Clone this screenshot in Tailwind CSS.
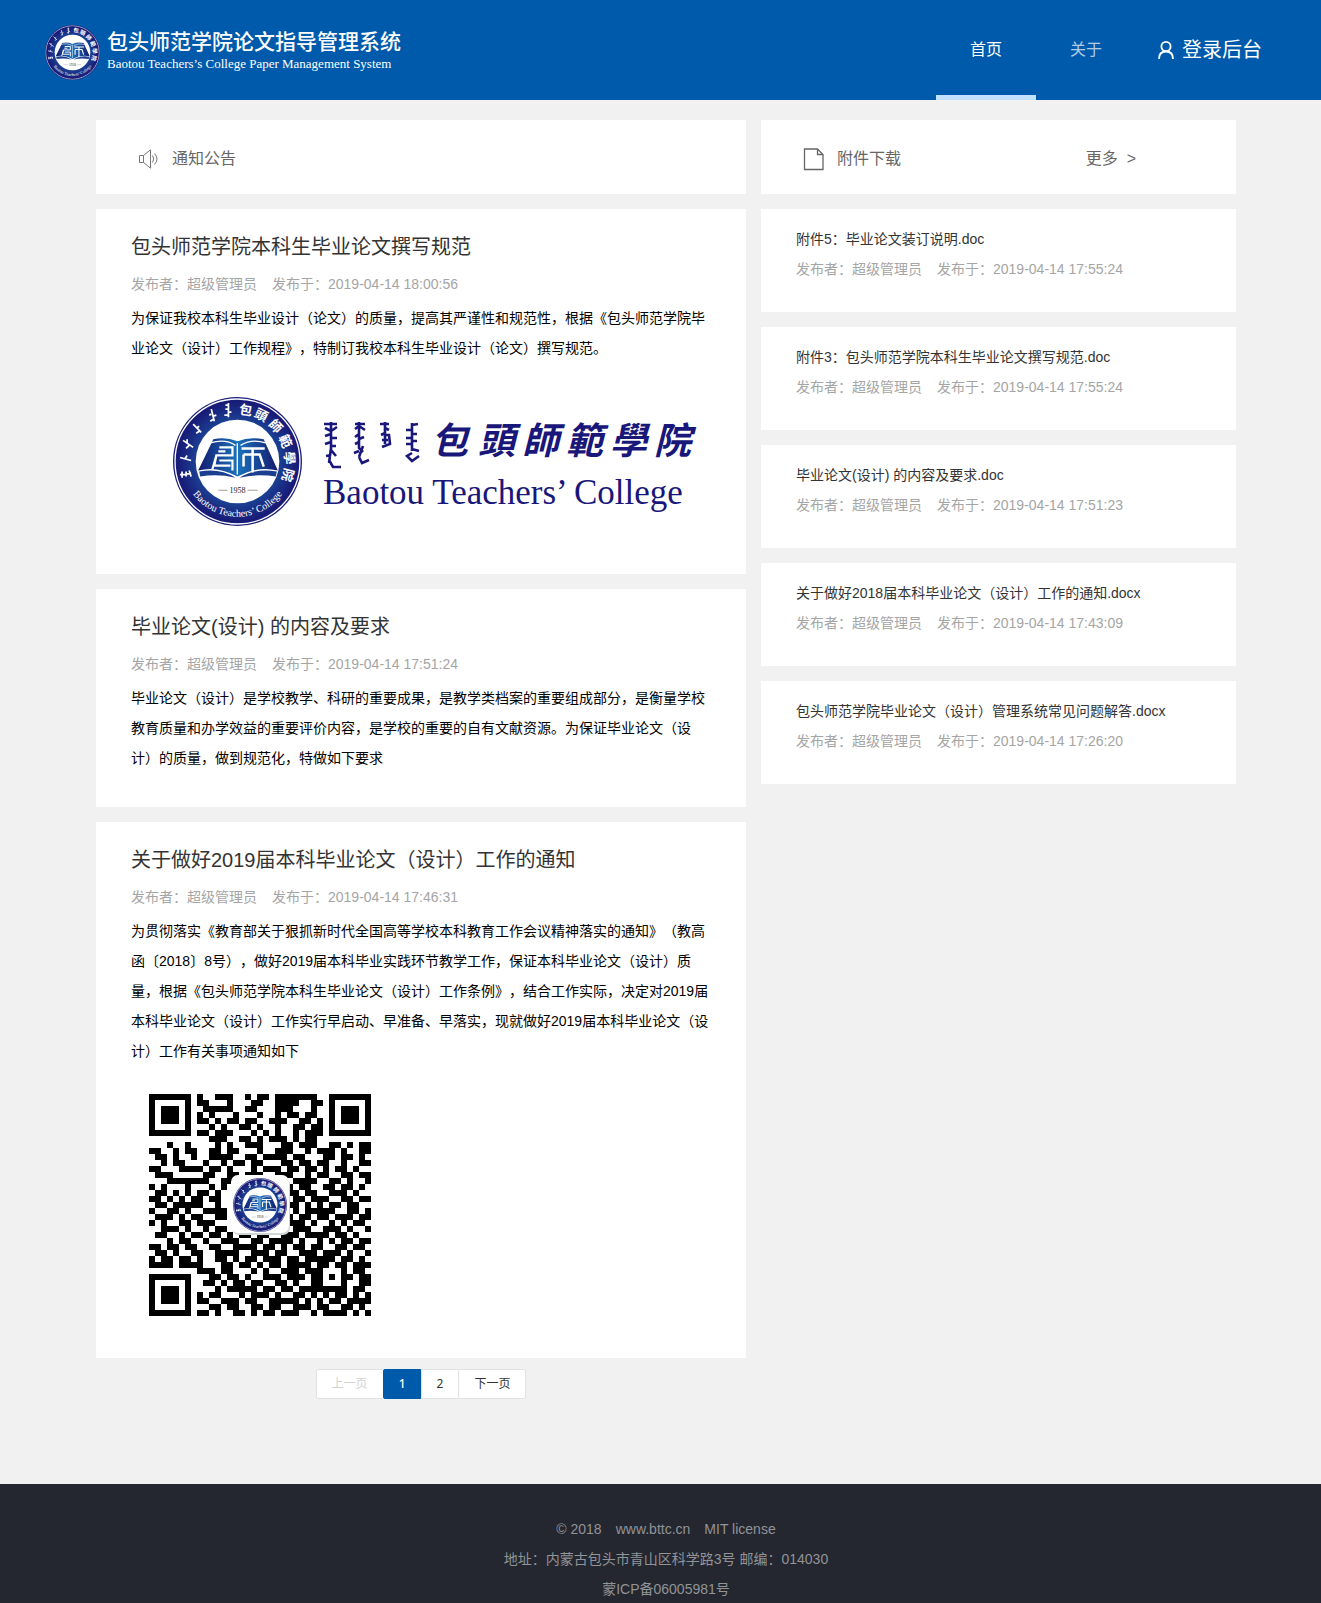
<!DOCTYPE html>
<html lang="zh-CN">
<head>
<meta charset="utf-8">
<meta name="viewport" content="width=device-width, initial-scale=1">
<title>包头师范学院论文指导管理系统</title>
<script src="https://cdn.jsdelivr.net/npm/@tailwindcss/browser@4"></script>
</head>
<body class="bg-[#f1f1f1] font-['Liberation_Sans','Noto_Sans_CJK_SC',sans-serif] text-sm leading-[30px] text-black [text-spacing-trim:space-all]">

<svg class="absolute size-0" aria-hidden="true">
  <defs>
    <radialGradient id="navy" cx="50%" cy="50%" r="50%">
      <stop offset="60%" stop-color="#1b4b9c"/><stop offset="80%" stop-color="#1a3187"/><stop offset="100%" stop-color="#171a76"/>
    </radialGradient>
    <linearGradient id="page" x1="0" x2="1"><stop offset="0" stop-color="#141a6e"/><stop offset=".5" stop-color="#1a72bc"/><stop offset="1" stop-color="#141a6e"/></linearGradient>
    <path id="ringText" d="M16.500 91.500A55 55 0 0 0 111.500 91.500"/>
    <symbol id="emblem" viewBox="0 0 128 128">
      <circle cx="64" cy="64" r="64" fill="#1b1e78"/>
      <circle cx="64" cy="64" r="62" fill="none" stroke="#fff" stroke-width="1.300"/>
      <circle cx="64" cy="64" r="60.500" fill="url(#navy)"/>
      <circle cx="64" cy="64" r="41.500" fill="#fff"/>
      <path d="M40 42Q52 39 64 44Q76 39 90 42L104 73Q84 68 64 79Q44 68 25 73Z" fill="url(#page)"/>
      <path d="M26 74Q46 70 62 80Q44 76 27 79ZM103 74Q82 70 66 80Q84 76 102 79Z" fill="#1a3f91"/>
      <path d="M37 45.500Q52 41 62 48M92 45.500Q78 41 67 48M63.800 46V77" fill="none" stroke="#fff" stroke-width="1.300"/>
      <path d="M46 50H59V58H43L41 68H57M45 54H52M46 63H59V73M39 72L43 58" fill="none" stroke="#fff" stroke-width="2.200"/>
      <path d="M68 51H91M79 51V75M70 57V69M70 57H86L90 69" fill="none" stroke="#fff" stroke-width="2.500"/>
      <text x="64" y="95.500" text-anchor="middle" font-family="Liberation Serif, serif" font-size="8" fill="#222">1958</text>
      <path d="M45 92.500H54M74 92.500H84" stroke="#777" stroke-width=".7"/>
      <text font-family="Liberation Serif, serif" font-size="10" fill="#fff"><textPath href="#ringText" startOffset="50%" text-anchor="middle">Baotou Teachers’ College</textPath></text>
      <g font-family="Noto Sans CJK TC, sans-serif" font-size="13" font-weight="700" fill="#fff" text-anchor="middle">
        <text x="64" y="17" transform="rotate(9 64 64)">包</text>
        <text x="64" y="17" transform="rotate(27 64 64)">頭</text>
        <text x="64" y="17" transform="rotate(47 64 64)">師</text>
        <text x="64" y="17" transform="rotate(67 64 64)">範</text>
        <text x="64" y="17" transform="rotate(86 64 64)">學</text>
        <text x="64" y="17" transform="rotate(105 64 64)">院</text>
      </g>
      <g fill="none" stroke="#fff" stroke-width="1.700">
        <path d="M55 6V20M55 8H52M55 12H52M55 15H58M55 18H51"/>
        <path d="M38 12L41 24M38 17L36 18M40 19L43 18M40 22L37 24"/>
        <path d="M20 27L28 35M23 31L26 29M26 34L23 36"/>
        <path d="M10 43L20 50M14 46V42M16 48L13 51"/>
        <path d="M7 60L18 63M12 61L14 58"/>
        <path d="M7 77L18 76M9 74V80M13 74V79M16 73L18 79"/>
      </g>
    </symbol>
  </defs>
</svg>

<header class="flex h-[100px] items-center justify-between bg-[#005aab] pl-[45px] pr-[59px]">
  <a href="#" class="flex items-center gap-[7px] pt-1 text-white">
    <svg class="size-[55px]" role="img" aria-label="校徽"><use href="#emblem"/></svg>
    <span class="block">
      <span class="block text-[21px] leading-6 font-medium">包头师范学院论文指导管理系统</span>
      <span class="block font-['Liberation_Serif',serif] text-[13px] leading-5">Baotou Teachers’s College Paper Management System</span>
    </span>
  </a>
  <nav class="flex h-full items-stretch text-base leading-[100px]">
    <a href="#" class="w-[100px] border-b-5 border-[#c2e1ff] text-center text-white">首页</a>
    <a href="#" class="w-[100px] text-center text-white/70">关于</a>
    <a href="#" class="flex items-center gap-2 pl-[22px] text-xl leading-[100px] text-white">
      <svg class="h-[18px] w-4" viewBox="0 0 16 18" fill="none" stroke="currentColor" stroke-width="1.800"><circle cx="8" cy="5.500" r="4.600"/><path d="M1 18C1 13 4 10.500 8 10.500S15 13 15 18"/></svg>
      登录后台
    </a>
  </nav>
</header>

<main class="mx-auto grid max-w-[1151px] grid-cols-[650fr_475fr] items-start gap-[15px] pt-5 pb-[85px] pl-[11px]">
  <h2 class="flex h-[74px] items-center bg-white pt-1 pl-[42px] text-base text-[#666]">
    <svg class="mr-[13px] h-5 w-[21px]" viewBox="0 0 21 20" fill="none" stroke="#777"><path d="M1.500 6.500H5.500L12.500 .8V19.200L5.500 13.500H1.500ZM5.500 6.500V13.500M14.500 6.500Q17 10 14.500 13.500M16.500 4.500Q21.500 10 16.500 15.500"/></svg>
    通知公告
  </h2>
  <div class="flex h-[74px] items-center bg-white pt-1 pr-[100px] pl-[42px] text-base text-[#666]">
    <svg class="mr-[13px] h-6 w-[21px]" viewBox="0 0 21 24" fill="none" stroke="#666" stroke-width="1.300"><path d="M1.500 2H14.500L20 7.500V22.500H1.500ZM14.500 2V7.500H20"/></svg>
    <h2>附件下载</h2>
    <a href="#" class="ml-auto flex gap-[9px]"><span>更多</span><span>&gt;</span></a>
  </div>

  <div>
    <div class="space-y-[15px]">
      <article class="bg-white px-[35px] pt-[23px] pb-[34px]">
        <h3 class="text-xl leading-[30px] text-[#333]"><a href="#">包头师范学院本科生毕业论文撰写规范</a></h3>
        <p class="mt-[7px] flex gap-[15px] text-[#a5a5a5]"><span>发布者：超级管理员</span><span>发布于：2019-04-14 18:00:56</span></p>
        <p class="mt-1">为保证我校本科生毕业设计（论文）的质量，提高其严谨性和规范性，根据《包头师范学院毕业论文（设计）工作规程》，特制订我校本科生毕业设计（论文）撰写规范。</p>
        <svg class="block h-[177px] w-full" viewBox="131 363 580 177" preserveAspectRatio="xMinYMin meet" role="img" aria-label="包头师范学院校名">
          <use href="#emblem" x="173" y="397" width="129" height="129"/>
          <g fill="#19177a">
            <text x="431 478 522 566 610 654" y="454" font-family="Noto Sans CJK TC, sans-serif" font-size="37" font-weight="700" font-style="italic">包頭師範學院</text>
            <text x="323" y="504" font-family="Liberation Serif, serif" font-size="35">Baotou Teachers’ College</text>
          </g>
          <g fill="none" stroke="#19177a" stroke-width="2.600">
            <path d="M331 422V450L336 456M324 424H337M325 428L331 431L337 427M331 434L325 436M331 438H337M331 442L325 444M331 446H336M331 448L329 463M331 455L326 456M329 460L333 467L341 467"/>
            <path d="M359 422V448L363 452M355 424H365M355 429L359 426L365 430M359 434L355 437M359 439L364 437M359 442L355 444M363 446L359 457M359 451L354 453M359 457L362 463L369 460"/>
            <path d="M385 422V444M380 424H389M385 428L389 430M385 433L381 435M385 435H389L390 444L382 447M382 440H388"/>
            <path d="M412 423V451M412 425L418 424M412 430H406M412 434H417M412 438H406M412 441H417M412 444H406M412 449L419 451M412 453L407 456L412 461L419 456"/>
          </g>
        </svg>
      </article>

      <article class="bg-white px-[35px] pt-[23px] pb-[34px]">
        <h3 class="text-xl leading-[30px] text-[#333]"><a href="#">毕业论文(设计) 的内容及要求</a></h3>
        <p class="mt-[7px] flex gap-[15px] text-[#a5a5a5]"><span>发布者：超级管理员</span><span>发布于：2019-04-14 17:51:24</span></p>
        <p class="mt-1">毕业论文（设计）是学校教学、科研的重要成果，是教学类档案的重要组成部分，是衡量学校教育质量和办学效益的重要评价内容，是学校的重要的自有文献资源。为保证毕业论文（设计）的质量，做到规范化，特做如下要求</p>
      </article>

      <article class="bg-white px-[35px] pt-[23px] pb-[34px]">
        <h3 class="text-xl leading-[30px] text-[#333]"><a href="#">关于做好2019届本科毕业论文（设计）工作的通知</a></h3>
        <p class="mt-[7px] flex gap-[15px] text-[#a5a5a5]"><span>发布者：超级管理员</span><span>发布于：2019-04-14 17:46:31</span></p>
        <p class="mt-1">为贯彻落实《教育部关于狠抓新时代全国高等学校本科教育工作会议精神落实的通知》（教高函〔2018〕8号），做好2019届本科毕业实践环节教学工作，保证本科毕业论文（设计）质量，根据《包头师范学院本科生毕业论文（设计）工作条例》，结合工作实际，决定对2019届本科毕业论文（设计）工作实行早启动、早准备、早落实，现就做好2019届本科毕业论文（设计）工作有关事项通知如下</p>
        <svg class="block size-[258px]" viewBox="0 -10 258 258" role="img" aria-label="二维码">
          <path id="qr" transform="translate(18 18) scale(6)" shape-rendering="crispEdges"/>
          <rect x="101" y="101" width="58" height="58" rx="7" fill="#cfd6d3"/>
          <rect x="100" y="99" width="58" height="58" rx="7" fill="#fff"/>
          <use href="#emblem" x="102" y="102" width="54" height="54"/>
        </svg>
      </article>
    </div>

    <nav class="mt-[11px] flex justify-center text-xs leading-7 text-[#333] font-['Noto_Sans','Noto_Sans_CJK_SC',sans-serif]" aria-label="分页">
      <button class="h-[30px] rounded-l-xs border border-[#e2e2e2] bg-white px-[15px] text-[#d2d2d2]" disabled>上一页</button>
      <button class="-ml-px h-[30px] rounded-xs border border-[#005aab] bg-[#005aab] px-[15px] font-medium text-white" aria-current="page">1</button>
      <button class="-ml-px h-[30px] border border-[#e2e2e2] bg-white px-[15px]">2</button>
      <button class="-ml-px h-[30px] rounded-r-xs border border-[#e2e2e2] bg-white px-[15px]">下一页</button>
    </nav>
  </div>

  <ul class="space-y-[15px]">
    <li class="bg-white px-[35px] pt-[15px] pb-7">
      <a href="#" class="block text-[#333]">附件5：毕业论文装订说明.doc</a>
      <p class="flex gap-[15px] text-[#a5a5a5]"><span>发布者：超级管理员</span><span>发布于：2019-04-14 17:55:24</span></p>
    </li>
    <li class="bg-white px-[35px] pt-[15px] pb-7">
      <a href="#" class="block text-[#333]">附件3：包头师范学院本科生毕业论文撰写规范.doc</a>
      <p class="flex gap-[15px] text-[#a5a5a5]"><span>发布者：超级管理员</span><span>发布于：2019-04-14 17:55:24</span></p>
    </li>
    <li class="bg-white px-[35px] pt-[15px] pb-7">
      <a href="#" class="block text-[#333]">毕业论文(设计) 的内容及要求.doc</a>
      <p class="flex gap-[15px] text-[#a5a5a5]"><span>发布者：超级管理员</span><span>发布于：2019-04-14 17:51:23</span></p>
    </li>
    <li class="bg-white px-[35px] pt-[15px] pb-7">
      <a href="#" class="block text-[#333]">关于做好2018届本科毕业论文（设计）工作的通知.docx</a>
      <p class="flex gap-[15px] text-[#a5a5a5]"><span>发布者：超级管理员</span><span>发布于：2019-04-14 17:43:09</span></p>
    </li>
    <li class="bg-white px-[35px] pt-[15px] pb-7">
      <a href="#" class="block text-[#333]">包头师范学院毕业论文（设计）管理系统常见问题解答.docx</a>
      <p class="flex gap-[15px] text-[#a5a5a5]"><span>发布者：超级管理员</span><span>发布于：2019-04-14 17:26:20</span></p>
    </li>
  </ul>
</main>

<footer class="bg-[#24272f] pt-[30px] pl-[11px] text-center text-[#919397]">
  <p class="flex justify-center gap-[14px]"><span>© 2018</span><a href="#">www.bttc.cn</a><span>MIT license</span></p>
  <p>地址：内蒙古包头市青山区科学路3号 邮编：014030</p>
  <p>蒙ICP备06005981号</p>
</footer>

<script>
  // QR modules, one string per row, 1 = dark
  const rows = [
    "1111111010011100101101111111001111111",
    "1000001011000100011001111001101000001",
    "1011101001111100110001110001001011101",
    "1011101010100010001001011011001011101",
    "1011101011010110110011100110101011101",
    "1000001000101001101001001101101000001",
    "1111111011011100010101001011101111111",
    "0000000000111001101011101011000000000",
    "0001001000010100111000110111001101011",
    "1100101100110110001001110010111010011",
    "0110100100111100110111101100011011010",
    "0010110001001011011000110110110010011",
    "1100011110110100010111011011010110100",
    "0111000001100110111001110010110011011",
    "0001111111001100000000101111001101001",
    "1010001000101000000000110110011011010",
    "0110101011010000000000011011001110100",
    "1101010110110000000000101101110011011",
    "0110111110010000000000111010101101100",
    "1001101001111000000000001011111001101",
    "0111010110011000000000110110110111011",
    "1010011011100000000000011101001010110",
    "0011101001011000000000101110011101001",
    "0110010110110101101100111011110110100",
    "0001011001001110011011110100101011011",
    "1101101100110011110110101101100110110",
    "0110100110011110011101100111011101001",
    "1011011010011010110111011011111011010",
    "1111011110001101101011011110110110111",
    "0000000011101100010100111011100010110",
    "1111111000110110100111011101101011011",
    "1000001001101011011001101001100010011",
    "1011101000010111110110110111111110110",
    "1011101010110001011101001101010110101",
    "1011101011001110110011111010101101111",
    "1000001000110110011011001110110011010",
    "1111111011010011010110111001011110101"
  ];
  document.getElementById("qr").setAttribute("d",
    rows.map((r, y) => [...r].map((v, x) => v === "1" ? `M${x} ${y}h1v1h-1z` : "").join("")).join(""));
</script>
</body>
</html>
